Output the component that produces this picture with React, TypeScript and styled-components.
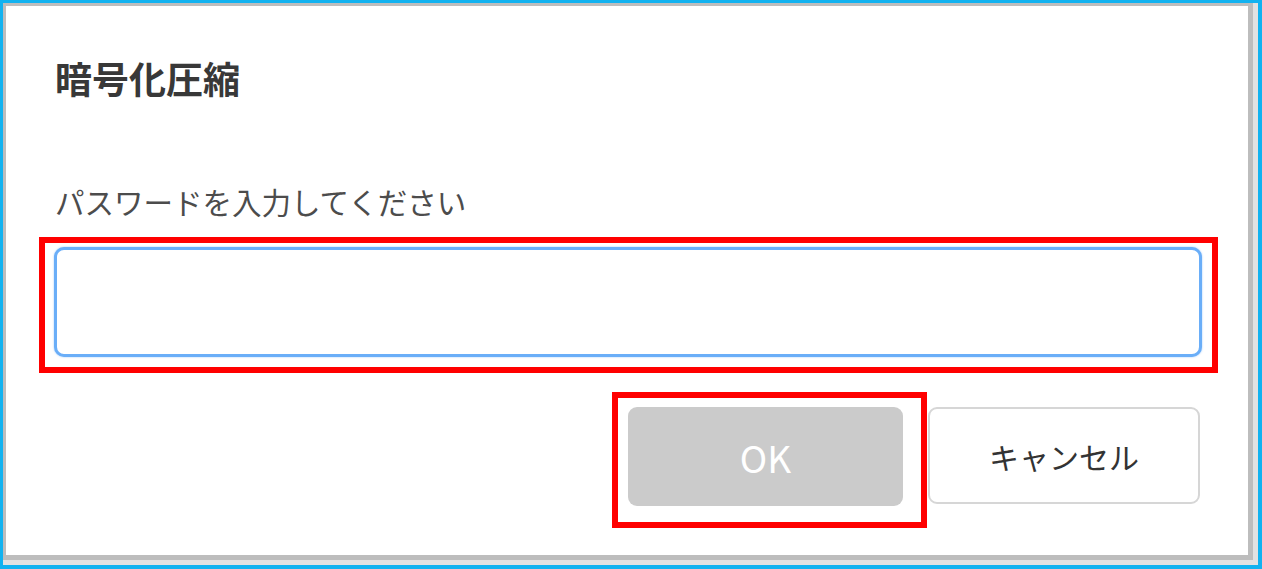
import styled, { createGlobalStyle } from 'styled-components'

const GlobalStyle = createGlobalStyle`
  html, body {
    margin: 0;
    padding: 0;
    background: #ffffff;
  }
  body {
    font-family: "Noto Sans CJK JP", "Noto Sans", sans-serif;
  }
`

const Frame = styled.div`
  width: 1262px;
  height: 569px;
  box-sizing: border-box;
  border-style: solid;
  border-color: #12b2f0;
  border-width: 3px 4px 4px 3px;
  display: flex;
`

const ShadowEdge = styled.div`
  flex: 1;
  display: flex;
  background: #e2e2e2;
  padding: 0 5px 5px 0;
`

const Dialog = styled.div`
  flex: 1;
  display: flex;
  flex-direction: column;
  background: #ffffff;
  border-style: solid;
  border-color: #bdbdbd;
  border-width: 3px 5px 5px 3px;
  padding: 54px 48px 0 49px;
`

const Title = styled.h1`
  margin: 0;
  font-size: 37px;
  line-height: 37px;
  font-weight: 700;
  color: #383838;
  letter-spacing: 0;
`

const Label = styled.p`
  margin: 89px 0 0 0;
  font-size: 29.5px;
  line-height: 30px;
  font-weight: 400;
  color: #4c4c4c;
`

const Highlight = styled.div<{ $pad: string }>`
  border: 6.5px solid #ff0000;
  padding: ${(p) => p.$pad};
  display: flex;
`

const InputArea = styled(Highlight)`
  margin: 21px -18px 0 -16px;
`

const PasswordInput = styled.input`
  flex: 1;
  height: 110px;
  box-sizing: border-box;
  border: 3.5px solid #6aaef8;
  border-radius: 10px;
  box-shadow: 0 0 2px rgba(106, 174, 248, 0.7);
  outline: none;
  background: #ffffff;
  font-size: 28px;
`

const ButtonRow = styled.div`
  display: flex;
  justify-content: flex-end;
  align-items: flex-start;
  margin-top: 19px;
`

const Button = styled.button<{ $primary?: boolean }>`
  font-family: "Noto Sans CJK JP", "Noto Sans", sans-serif;
  box-sizing: border-box;
  border-radius: 9px;
  cursor: pointer;
  display: flex;
  align-items: center;
  justify-content: center;
  padding: 0;
  ${(p) =>
    p.$primary
      ? `
    width: 275px;
    height: 99px;
    background: #cbcbcb;
    border: none;
    color: #ffffff;
    font-size: 37px;
  `
      : `
    width: 272px;
    height: 97px;
    margin-top: 15px;
    background: #ffffff;
    border: 2px solid #d6d6d6;
    color: #333333;
    font-size: 30px;
  `}
`

const OkArea = styled(Highlight)`
  margin-right: 1px;
`

export default function App() {
  return (
    <>
      <GlobalStyle />
      <Frame>
        <ShadowEdge>
          <Dialog>
            <Title>暗号化圧縮</Title>
            <Label>パスワードを入力してください</Label>
            <InputArea $pad="4px 10px 10px 9px">
              <PasswordInput type="password" aria-label="パスワード" />
            </InputArea>
            <ButtonRow>
              <OkArea $pad="9px 18px 16px 10px">
                <Button $primary disabled>OK</Button>
              </OkArea>
              <Button>キャンセル</Button>
            </ButtonRow>
          </Dialog>
        </ShadowEdge>
      </Frame>
    </>
  )
}
